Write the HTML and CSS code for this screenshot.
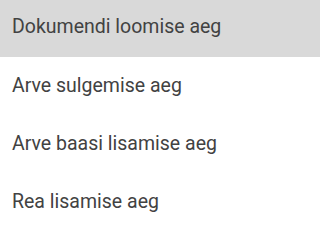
FILE: index.html
```html
<!DOCTYPE html>
<html lang="et">
<head>
<meta charset="utf-8">
<link rel="stylesheet" href="styles.css">
</head>
<body>
<ul class="menu">
  <li class="menu-item is-active">Dokumendi loomise aeg</li>
  <li class="menu-item">Arve sulgemise aeg</li>
  <li class="menu-item">Arve baasi lisamise aeg</li>
  <li class="menu-item">Rea lisamise aeg</li>
</ul>
</body>
</html>
```
FILE: styles.css
```css
html, body {
  margin: 0;
  padding: 0;
  background: #ffffff;
}
.menu {
  list-style: none;
  margin: -1.86px 0 0 0;
  padding: 0;
  font-family: Roboto, "Liberation Sans", sans-serif;
  font-size: 19.5px;
  color: #424242;
}
.menu-item {
  height: 58.4px;
  line-height: 58.4px;
  padding: 0 12px;
  white-space: nowrap;
}
.menu-item.is-active {
  background: #d9d9d9;
}
```
